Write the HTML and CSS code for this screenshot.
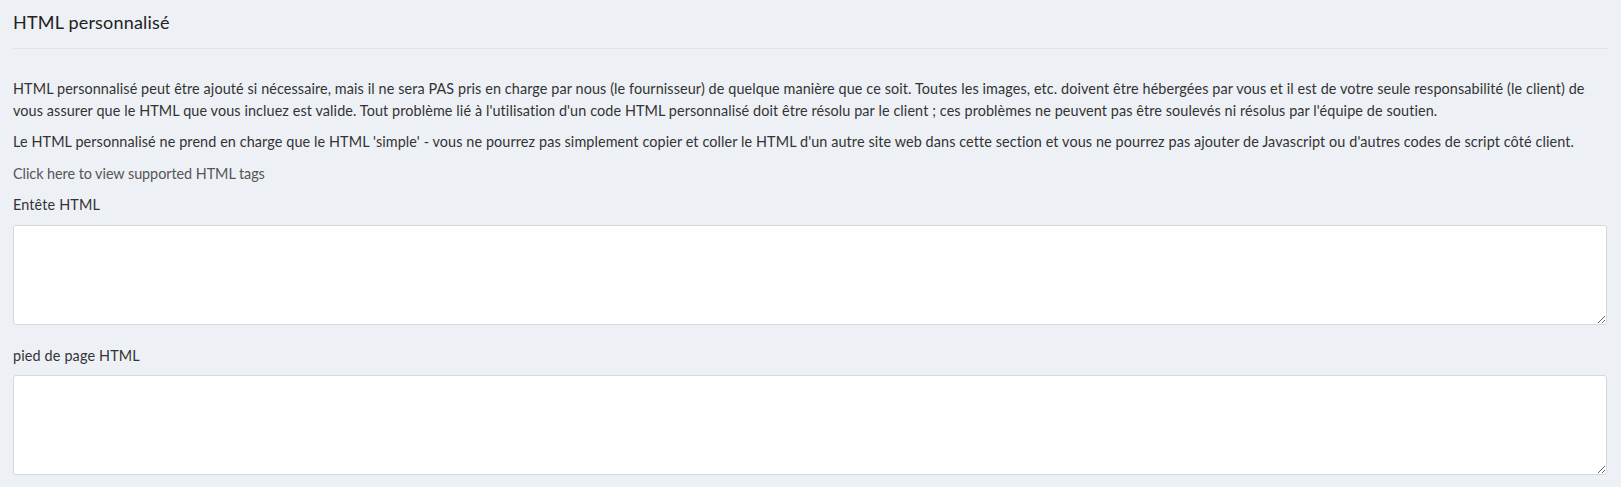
FILE: index.html
```html
<!DOCTYPE html>
<html lang="fr">
<head>
<meta charset="utf-8">
<title>HTML personnalisé</title>
<link rel="stylesheet" href="styles.css">
</head>
<body>
<div class="panel">
  <h3 class="panel-title">HTML personnalisé</h3>
  <div class="panel-body">
    <p>HTML personnalisé peut être ajouté si nécessaire, mais il ne sera PAS pris en charge par nous (le fournisseur) de quelque manière que ce soit. Toutes les images, etc. doivent être hébergées par vous et il est de votre seule responsabilité (le client) de vous assurer que le HTML que vous incluez est valide. Tout problème lié à l'utilisation d'un code HTML personnalisé doit être résolu par le client ; ces problèmes ne peuvent pas être soulevés ni résolus par l'équipe de soutien.</p>
    <p>Le HTML personnalisé ne prend en charge que le HTML 'simple' - vous ne pourrez pas simplement copier et coller le HTML d'un autre site web dans cette section et vous ne pourrez pas ajouter de Javascript ou d'autres codes de script côté client.</p>
    <p><a class="tags-link" href="#">Click here to view supported HTML tags</a></p>
    <div class="form-group">
      <label class="field-label" for="header-html">Entête HTML</label>
      <textarea id="header-html" class="field-input"></textarea>
    </div>
    <div class="form-group">
      <label class="field-label" for="footer-html">pied de page HTML</label>
      <textarea id="footer-html" class="field-input"></textarea>
    </div>
  </div>
</div>
</body>
</html>
```
FILE: styles.css
```css
html, body {
  margin: 0;
  padding: 0;
  background: #edf1f5;
}
body {
  font-family: Lato, "Open Sans", "Liberation Sans", sans-serif;
  font-size: 14.4px;
  letter-spacing: 0.1px;
  line-height: 21.5px;
  color: #333;
}
.panel {
  padding: 0 14px 0 13px;
}
.panel-title {
  margin: 0;
  padding: 10px 0 14px;
  font-size: 18px;
  letter-spacing: 0.2px;
  line-height: 24px;
  font-weight: 400;
  color: #222;
  border-bottom: 1px solid #dfe3e7;
}
.panel-body {
  padding-top: 29px;
}
.panel-body p {
  margin: 0 0 10px;
}
.tags-link {
  color: #555;
  letter-spacing: -0.05px;
  text-decoration: none;
}
.form-group {
  display: flex;
  flex-direction: column;
  margin-top: 10px;
}
.form-group + .form-group {
  margin-top: 20px;
}
.field-label {
  display: block;
  margin-bottom: 9px;
  letter-spacing: 0.15px;
  color: #333;
}
.field-input {
  box-sizing: border-box;
  display: block;
  width: 100%;
  height: 100px;
  margin: 0;
  padding: 6px 10px;
  background: #fff;
  border: 1px solid #d6d9dc;
  border-radius: 3px;
  font: inherit;
  color: #333;
}
```
